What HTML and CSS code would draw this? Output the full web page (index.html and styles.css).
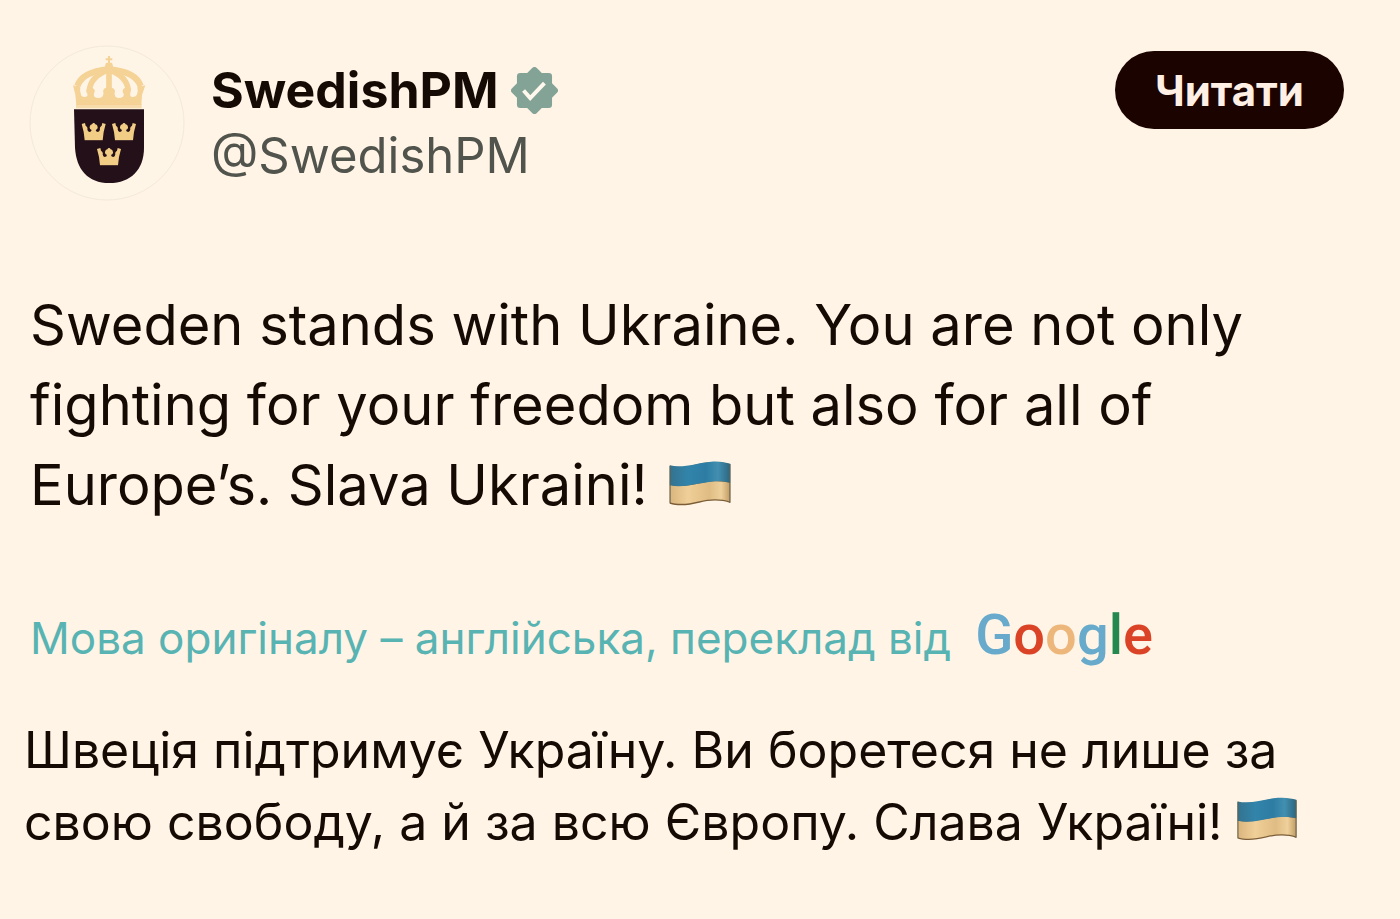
FILE: index.html
```html
<!DOCTYPE html>
<html lang="uk">
<head>
    <meta charset="UTF-8">
    <meta name="viewport" content="width=device-width, initial-scale=1.0">
    <title>SwedishPM</title>
    <link rel="stylesheet" href="styles.css">
</head>
<body>
    <!-- shared shapes -->
    <svg class="defs" width="0" height="0" aria-hidden="true">
        <defs>
            <linearGradient id="blue" x1="0" x2="1" y1="0" y2="0">
                <stop offset="0" stop-color="#34728f"/>
                <stop offset="0.3" stop-color="#3284aa"/>
                <stop offset="0.6" stop-color="#2d7ca3"/>
                <stop offset="0.8" stop-color="#428fb0"/>
                <stop offset="1" stop-color="#2b6680"/>
            </linearGradient>
            <linearGradient id="yellow" x1="0" x2="1" y1="0" y2="0">
                <stop offset="0" stop-color="#d9b57d"/>
                <stop offset="0.3" stop-color="#f0cf98"/>
                <stop offset="0.65" stop-color="#dfbc83"/>
                <stop offset="0.85" stop-color="#efd09b"/>
                <stop offset="1" stop-color="#c09a62"/>
            </linearGradient>
            <symbol id="flag" viewBox="60 62 184 134">
                <path d="M62 78 C100 90 145 66 185 66 C210 65 228 68 242 72 V187 C215 177 180 178 150 186 C115 195 85 196 62 189 Z" fill="#7b5c36"/>
                <path d="M62 133 C100 144 145 127 185 123 C210 121 228 124 242 127 V183 C215 173 180 174 150 182 C115 191 85 192 62 185 Z" fill="url(#yellow)"/>
                <path d="M62 75 C100 85 145 67 185 64 C210 62 228 66 242 70 V127 C228 123 210 121 185 124 C145 128 100 144 62 134 Z" fill="url(#blue)"/>
                <path d="M63 76 V188 M241 71 V186" stroke="#5f6250" stroke-width="3" fill="none"/>
            </symbol>
            <symbol id="small-crown" viewBox="0 0 74 54">
                <path d="M10 53 L7 28 L1 4 L11 1 L13 9 Q20 13 18 20 Q19 28 24 28 Q30 28 31 22 Q24 20 25 13 Q26 6 32 5 Q37 -4 42 5 Q48 6 49 13 Q50 20 43 22 Q44 28 50 28 Q55 28 56 20 Q54 13 61 9 L63 1 L73 4 L67 28 L64 53 Z" fill="#f2cd85"/>
            </symbol>
        </defs>
    </svg>

    <article class="post">
        <header class="post-header">
            <svg class="avatar" viewBox="27 27 468 468" role="img" aria-label="SwedishPM">
                <circle cx="261" cy="261" r="231" fill="#fff5e6" stroke="#f3e9dc" stroke-width="3"/>
                <!-- royal crown -->
                <g fill="none" stroke="#f5d296">
                    <path d="M172 150 C182 122 214 104 266 100 C322 104 352 122 362 150" stroke-width="19"/>
                    <path d="M208 163 C211 135 230 115 262 103 M325 163 C322 135 303 115 271 103" stroke-width="17"/>
                    <path d="M267 90 V160" stroke-width="17"/>
                </g>
                <g fill="#f5d296">
                    <path d="M258 80 h18 l5 17 h-28 z"/>
                    <path d="M264 60 h6 v7 h7 v6 h-7 v9 h-6 v-9 h-7 v-6 h7 z"/>
                    <path d="M169 207 L166 176 L159 148 L168 151 L174 146 L181 154 Q178 165 184 179 Q193 187 202 180 Q204 173 199 168 Q197 160 205 157 Q211 147 219 157 Q227 162 223 170 Q219 175 224 183 Q237 190 247 182 Q253 172 249 166 Q251 156 259 155 Q267 144 275 155 Q284 157 285 166 Q281 174 287 183 Q298 190 309 182 Q314 175 308 169 Q307 158 315 156 Q322 148 329 157 Q335 162 331 170 Q329 177 333 182 Q344 185 351 176 Q355 164 352 154 L359 146 L366 151 L376 148 L366 177 L364 207 Z"/>
                    <path d="M168 205 H365 V217 H168 Z" opacity="0.75"/>
                </g>
                <!-- shield -->
                <path d="M162 220 H372 V335 C372 400 333 441 268 441 C203 441 169 400 165 335 Z" fill="#241019"/>
                <use href="#small-crown" x="184" y="260" width="74" height="54"/>
                <use href="#small-crown" x="275" y="260" width="74" height="54"/>
                <use href="#small-crown" x="230" y="335" width="74" height="54"/>
            </svg>

            <div class="author">
                <div class="name-row">
                    <h1 class="name">SwedishPM</h1>
                    <svg class="badge" viewBox="935 49 142 142" role="img" aria-label="Verified">
                        <g fill="#84a397">
                            <rect x="953" y="67" width="106" height="106" rx="10"/>
                            <rect x="953" y="67" width="106" height="106" rx="10" transform="rotate(45 1006 120)"/>
                        </g>
                        <path d="M973 120 L993 143 L1036 98" fill="none" stroke="#fff8ec" stroke-width="12"/>
                    </svg>
                </div>
                <a class="handle" href="#">@SwedishPM</a>
            </div>

            <button class="follow-btn" type="button">Читати</button>
        </header>

        <p class="post-text" lang="en">
            Sweden stands with Ukraine. You are not only<br>
            fighting for your freedom but also for all of<br>
            Europe’s. Slava Ukraini! <svg class="flag" role="img" aria-label="Ukraine"><use href="#flag"/></svg>
        </p>

        <div class="source">
            <a href="#">Мова оригіналу – англійська, переклад від</a>
            <span class="google"><span class="g-blue">G</span><span class="g-red">o</span><span class="g-yellow">o</span><span class="g-blue">g</span><span class="g-green">l</span><span class="g-red">e</span></span>
        </div>

        <p class="translation">
            Швеція підтримує Україну. Ви боретеся не лише за<br>
            свою свободу, а й за всю Європу. Слава Україні! <svg class="flag" role="img" aria-label="Україна"><use href="#flag"/></svg>
        </p>
    </article>
</body>
</html>
```

FILE: styles.css
```css
* {
    box-sizing: border-box;
}

body {
    margin: 0;
    background: #fff4e5;
    color: #150b04;
    font-family: Inter, "Noto Sans", sans-serif;
}

h1,
p {
    margin: 0;
}

a {
    text-decoration: none;
}

.defs {
    display: block;
}

.post {
    padding: 45px 24px 60px;
}

/* header */
.post-header {
    display: flex;
    align-items: flex-start;
    padding: 0 32px 0 5px;
}

.avatar {
    flex: none;
    width: 156px;
    height: 156px;
}

.author {
    flex: 1;
    padding: 12px 0 0 26px;
}

.name-row {
    display: flex;
    align-items: center;
    gap: 12px;
}

.name {
    font-size: 50px;
    line-height: 66px;
    font-weight: 700;
}

.badge {
    width: 47px;
    height: 47px;
}

.handle {
    display: block;
    color: #51544c;
    font-size: 49px;
    line-height: 66px;
}

.follow-btn {
    width: 229px;
    height: 78px;
    margin-top: 6px;
    border: none;
    border-radius: 39px;
    background: #1b0300;
    color: #ffefe5;
    font-family: inherit;
    font-size: 42px;
    font-weight: 700;
    cursor: pointer;
}

/* text */
.post-text {
    margin-top: 84px;
    padding-left: 6px;
    font-size: 56px;
    line-height: 80px;
    white-space: nowrap;
}

.flag {
    width: 62px;
    height: 45px;
    margin-left: 6px;
    vertical-align: -1px;
}

.source {
    display: flex;
    align-items: baseline;
    gap: 24px;
    margin-top: 70px;
    padding-left: 6px;
    line-height: 80px;
    white-space: nowrap;
}

.source a {
    color: #58b3b3;
    font-size: 44px;
}

.google {
    font-family: Roboto, sans-serif;
    font-size: 56px;
    font-weight: 500;
}

.g-blue {
    color: #67aacb;
}

.g-red {
    color: #db4327;
}

.g-yellow {
    color: #edb77c;
}

.g-green {
    color: #25894f;
}

.translation {
    margin-top: 36px;
    font-size: 50px;
    line-height: 72px;
    white-space: nowrap;
}

.translation .flag {
    width: 60px;
    height: 44px;
    margin-left: 0;
}
```
